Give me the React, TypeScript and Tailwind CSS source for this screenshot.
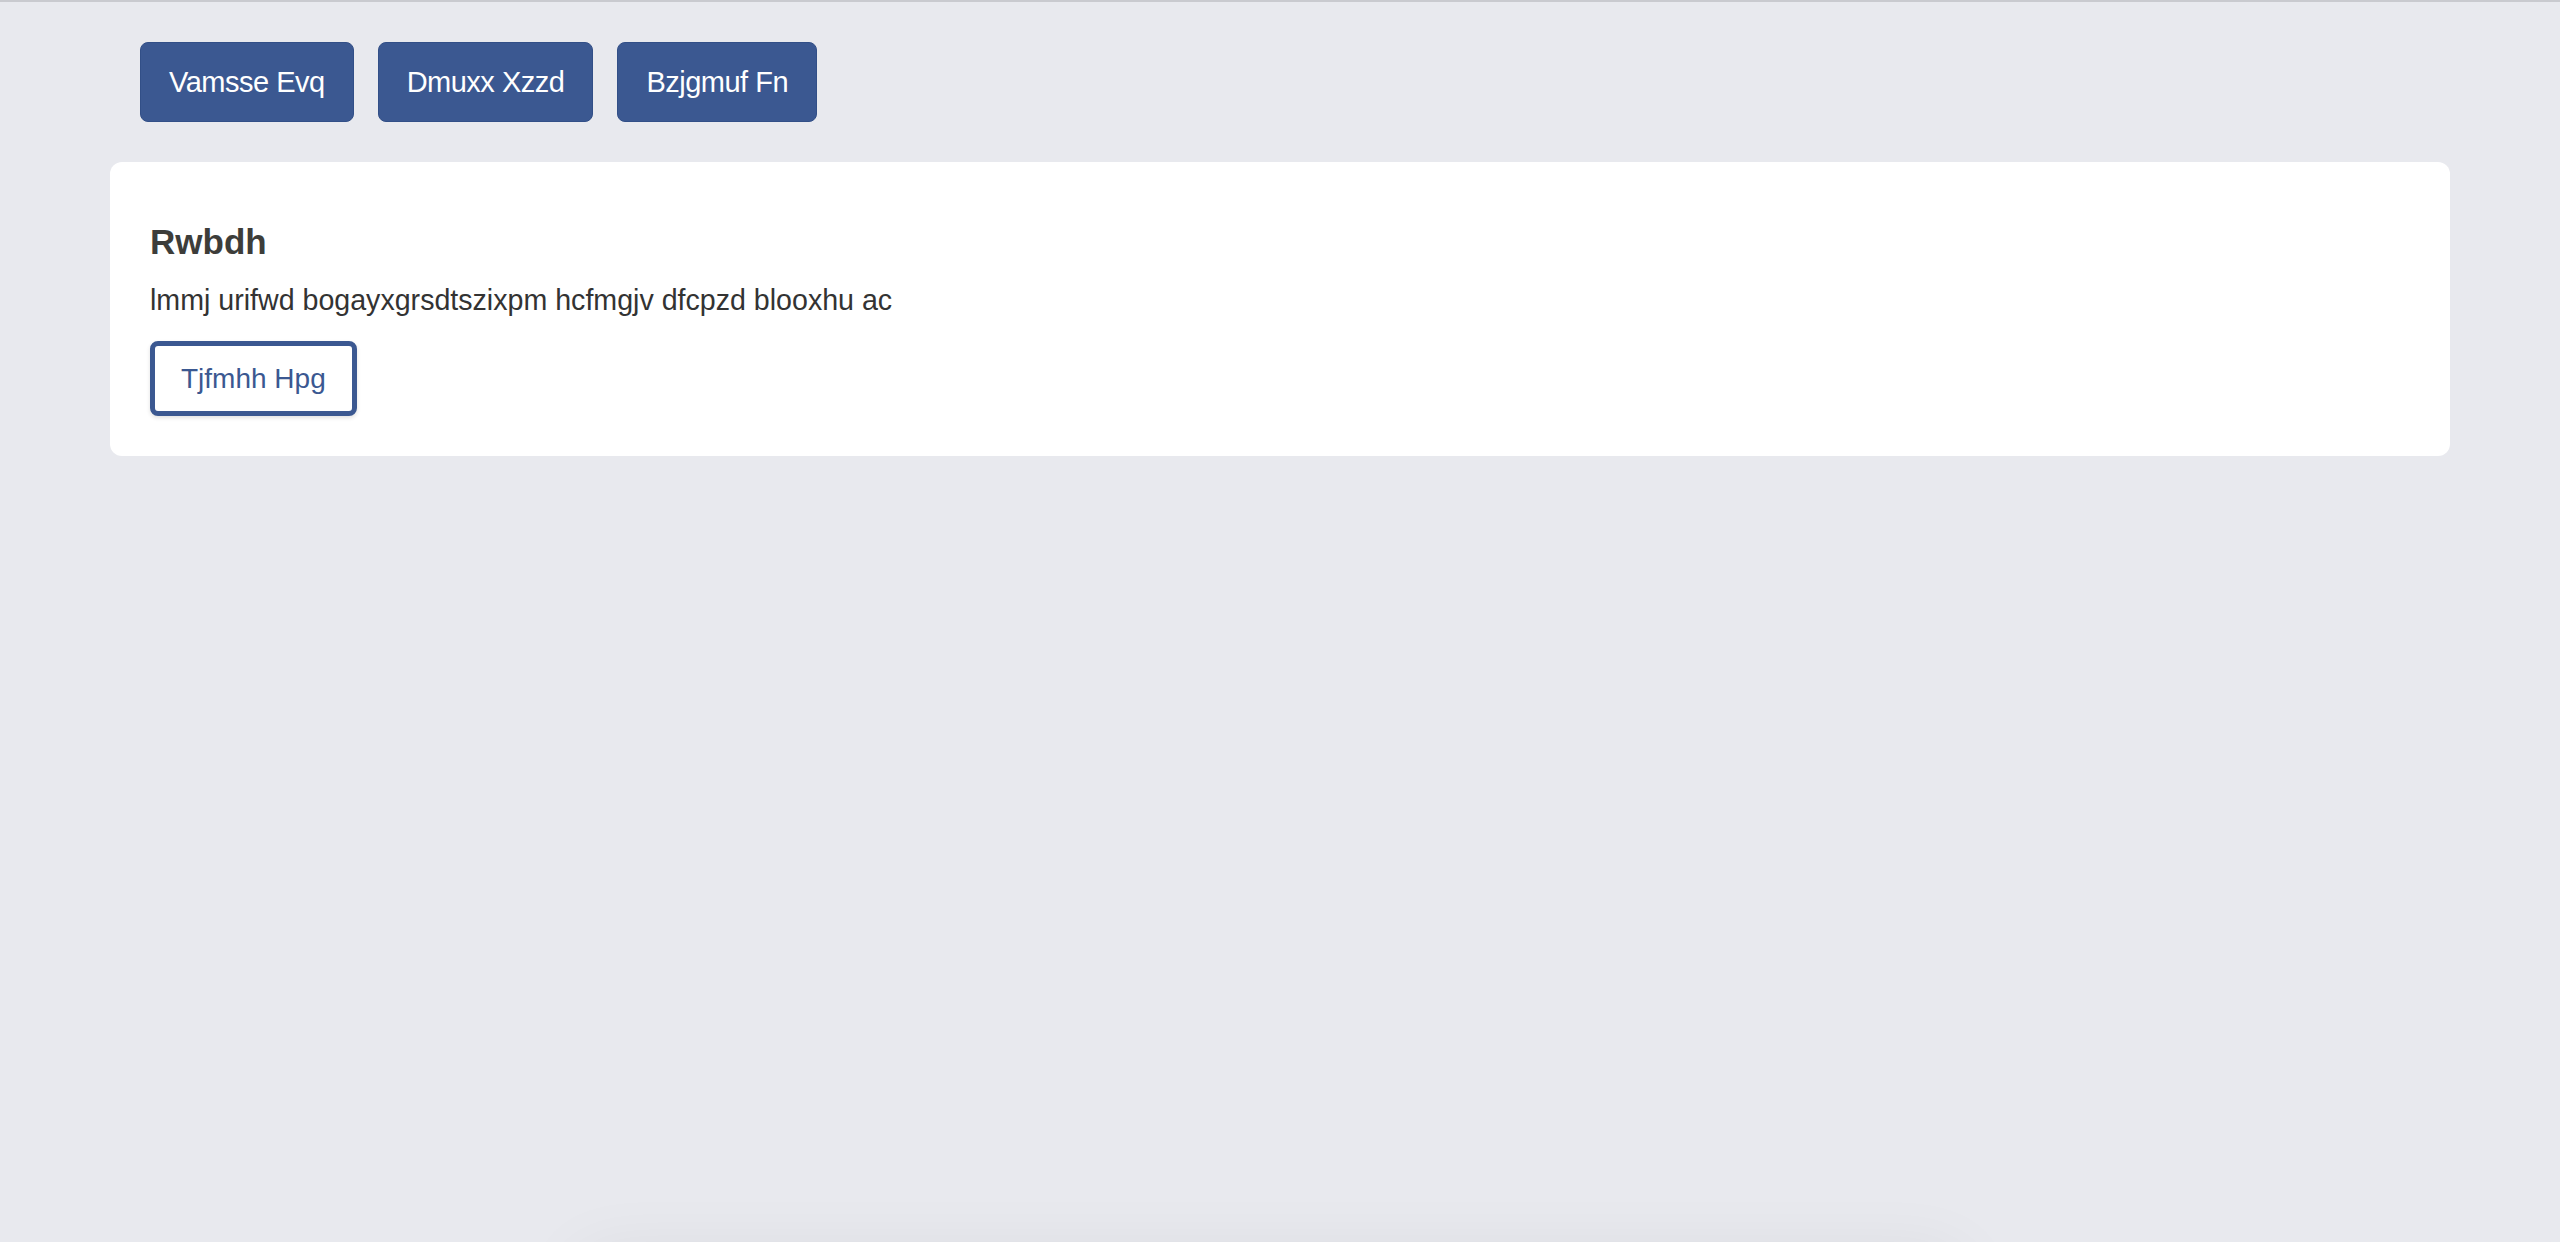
export default function App() {
  const tabs = ['Vamsse Evq', 'Dmuxx Xzzd', 'Bzjgmuf Fn'];

  return (
    <div className="min-h-screen bg-[#e8e9ee] border-t-2 border-[#c9cacf] font-['Liberation_Sans',Arial,sans-serif] overflow-hidden">
      <div className="flex gap-[24px] pt-[40px] pl-[140px]">
        {tabs.map((t) => (
          <button
            key={t}
            className="h-[80px] px-[28px] rounded-[8px] bg-[#3b5891] border border-[#324f87] text-white text-[29px] tracking-[-0.5px] leading-[40px]"
          >
            {t}
          </button>
        ))}
      </div>

      <div className="mx-[110px] mt-[40px] bg-white rounded-[12px] px-[40px] pt-[60px] pb-[40px]">
        <h2 className="text-[35px] leading-[40px] font-bold text-[#3d3d3a]">Rwbdh</h2>
        <p className="mt-[18px] text-[28.6px] leading-[40px] text-[#333333]">
          lmmj urifwd bogayxgrsdtszixpm hcfmgjv dfcpzd blooxhu ac
        </p>
        <button className="mt-[21px] h-[75px] px-[26px] border-[5px] border-[#3b5891] rounded-[8px] bg-white text-[#3b5891] text-[28px] leading-[40px] shadow-[0_2px_4px_rgba(0,0,0,0.12)]">
          Tjfmhh Hpg
        </button>
      </div>

      <div className="fixed left-[580px] w-[1380px] top-[1256px] h-[100px] rounded-[12px] bg-white shadow-[0_0_70px_rgba(0,0,0,0.07)]" />
    </div>
  );
}
